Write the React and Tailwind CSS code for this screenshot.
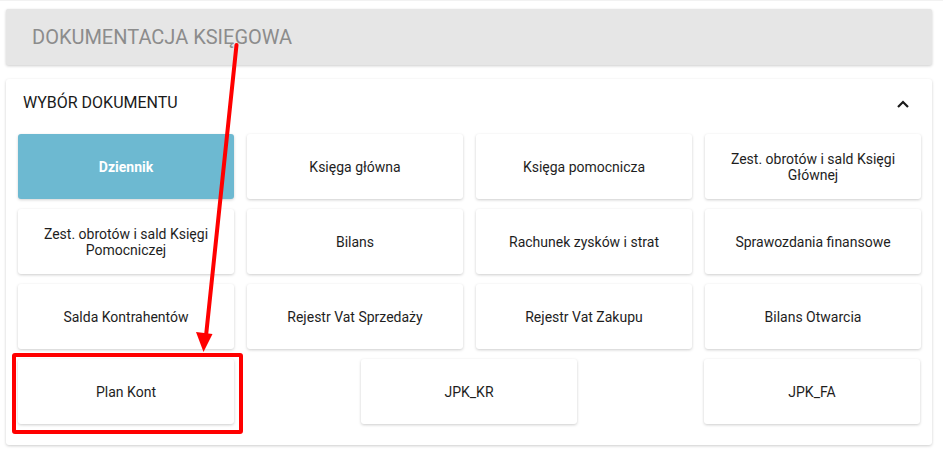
import React from "react";

const rows = [
  ["Dziennik", "Księga główna", "Księga pomocnicza", "Zest. obrotów i sald Księgi Głównej"],
  ["Zest. obrotów i sald Księgi Pomocniczej", "Bilans", "Rachunek zysków i strat", "Sprawozdania finansowe"],
  ["Salda Kontrahentów", "Rejestr Vat Sprzedaży", "Rejestr Vat Zakupu", "Bilans Otwarcia"],
];

function Btn({ label, active }) {
  return (
    <div
      className={
        "h-[65px] w-[216px] flex items-center justify-center text-center px-4 rounded-[3px] text-[14px] leading-4 " +
        (active
          ? "bg-[#6db9d1] text-white font-bold shadow-[0_1px_3px_rgba(0,0,0,0.18)]"
          : "bg-white text-[#1e1e1e] shadow-[0_1px_3px_rgba(0,0,0,0.2)]")
      }
    >
      {label}
    </div>
  );
}

export default function App() {
  return (
    <div className="relative w-[943px] h-[454px] bg-white font-['Roboto',sans-serif] overflow-hidden">
      <div className="border-t border-[#f2f2f2] pt-[8px] px-[6px] pr-[11px]">
        <div className="h-[56px] bg-[#e6e6e6] rounded-[2px] shadow-[0_1px_3px_rgba(0,0,0,0.2)] flex items-center pl-[26px]">
          <span className="text-[20px] text-[#8c8c8c]">DOKUMENTACJA KSIĘGOWA</span>
        </div>
        <div className="mt-[14px] bg-white rounded-[3px] shadow-[0_1px_3px_rgba(0,0,0,0.2)] pt-[15px] pb-[21px] pl-[12px] pr-[10px]">
          <div className="flex items-center justify-between h-[18px] pl-[5px] pr-[12px]">
            <span className="text-[16px] text-[#1a1a1a]">WYBÓR DOKUMENTU</span>
            <svg width="14" height="10" viewBox="0 0 14 10" className="mt-[2px]">
              <path d="M2 8 L7 3 L12 8" fill="none" stroke="#1a1a1a" strokeWidth="2.2" />
            </svg>
          </div>
          <div className="mt-[22px] flex flex-col gap-[10px]">
            {rows.map((r, i) => (
              <div key={i} className="flex gap-[13px]">
                {r.map((l, j) => (
                  <Btn key={j} label={l} active={i === 0 && j === 0} />
                ))}
              </div>
            ))}
            <div className="flex justify-between w-[902px]">
              <Btn label="Plan Kont" />
              <Btn label="JPK_KR" />
              <Btn label="JPK_FA" />
            </div>
          </div>
        </div>
      </div>

      <div className="absolute left-[12px] top-[353px] w-[231px] h-[81px] border-4 border-[#ff0000] rounded-[3px]" />

      <svg className="absolute left-0 top-0 pointer-events-none" width="943" height="454" viewBox="0 0 943 454">
        <line x1="236.5" y1="45" x2="206" y2="336" stroke="#ff0000" strokeWidth="4" strokeLinecap="round" />
        <polygon points="196,332 212.5,334 203.5,352" fill="#ff0000" />
      </svg>
    </div>
  );
}
